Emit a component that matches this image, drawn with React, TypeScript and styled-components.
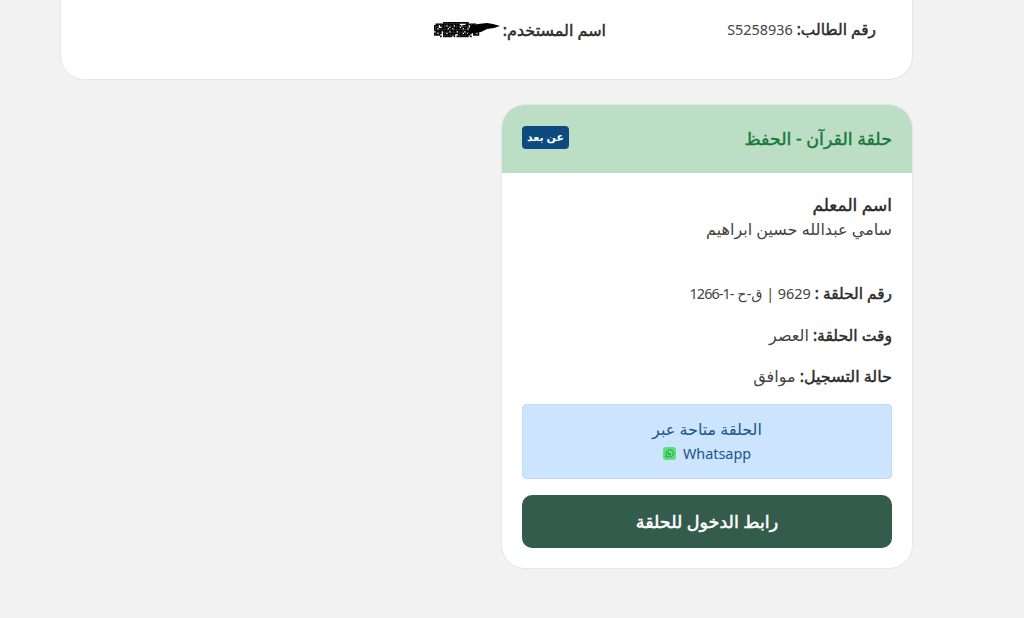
import React from "react";
import styled, { createGlobalStyle } from "styled-components";

const GlobalStyle = createGlobalStyle`
  html, body {
    margin: 0;
    padding: 0;
    height: 618px;
    overflow: hidden;
    background: #f2f2f2;
    font-family: "Noto Sans", "DejaVu Sans", sans-serif;
    color: #333333;
  }
  * { box-sizing: border-box; }
`;

const Page = styled.div`
  direction: rtl;
  padding: 0 111px 0 60px;
  display: flex;
  flex-direction: column;
  gap: 24px;
`;

const StudentCard = styled.div`
  height: 80px;
  background: #fff;
  border: 1px solid #e6e6e6;
  border-top: none;
  border-radius: 0 0 24px 24px;
  padding: 18px 36px 0;
  display: flex;
  align-items: flex-start;
  font-size: 14.4px;
`;

const StudentCell = styled.div`
  width: 270px;
  height: 24px;
  line-height: 24px;
  display: flex;
  align-items: center;
  gap: 4px;
  white-space: nowrap;
`;

const Bold = styled.b<{ $size?: number }>`
  font-size: ${(p) => p.$size ?? 15.6}px;
  font-weight: 400;
  color: #2b2b2b;
  -webkit-text-stroke: 0.45px #2b2b2b;
`;

const Plain = styled.span`
  color: #444;
  font-size: 14.4px;
`;

const CircleCode = styled.span`
  display: inline-block;
  direction: ltr;
  letter-spacing: -0.9px;
`;

const ArabicPlain = styled.span`
  color: #444;
  font-size: 16px;
`;

const CircleCard = styled.div`
  width: 412px;
  height: 465px;
  background: #fff;
  border: 1px solid #e6e6e6;
  border-radius: 24px;
  overflow: hidden;
  display: flex;
  flex-direction: column;
`;

const CircleHeader = styled.div`
  height: 68px;
  background: #bcdec5;
  padding: 0 20px;
  display: flex;
  align-items: center;
  justify-content: space-between;
`;

const CircleTitle = styled.h3`
  margin: -2px 0 0;
  font-size: 17.5px;
  font-weight: 400;
  color: #19783c;
  -webkit-text-stroke: 0.4px #19783c;
`;

const ModeBadge = styled.span`
  background: #0d4a80;
  color: #fff;
  font-size: 11px;
  font-weight: 700;
  line-height: 22px;
  height: 23px;
  padding: 0 5px;
  border-radius: 4px;
  margin-top: -4px;
`;

const CircleBody = styled.div`
  padding: 20px 20px 0;
  display: flex;
  flex-direction: column;
  font-size: 14.4px;
`;

const TeacherName = styled.div`
  height: 24px;
  line-height: 24px;
  color: #444;
  font-size: 16px;
`;

const TeacherLabel = styled.div`
  height: 24px;
  line-height: 24px;
  font-size: 17px;
  color: #2b2b2b;
  -webkit-text-stroke: 0.45px #2b2b2b;
`;

const InfoRow = styled.div<{ $top: number }>`
  height: 24px;
  line-height: 24px;
  margin-top: ${(p) => p.$top}px;
`;

const Notice = styled.div`
  margin-top: 16px;
  height: 75px;
  background: #cce4fd;
  border: 1px solid #bfdcf8;
  border-radius: 4px;
  color: #1b5688;
  display: flex;
  flex-direction: column;
  align-items: center;
  justify-content: center;
  line-height: 24px;
`;

const NoticeLine = styled.div`
  font-size: 16px;
  height: 24px;
  line-height: 22px;
`;

const Channel = styled.div`
  display: flex;
  align-items: center;
  gap: 7px;
  direction: ltr;
  height: 24px;
`;

const JoinButton = styled.button`
  margin-top: 16px;
  height: 53px;
  width: 100%;
  border: none;
  border-radius: 10px;
  padding: 0 0 2px;
  background: #335c4d;
  color: #fff;
  font-family: inherit;
  font-size: 17.5px;
  font-weight: 400;
  -webkit-text-stroke: 0.5px #fff;
`;

const ScribbleMark = styled.svg`
  margin-right: -1px;
  flex-shrink: 0;
`;

const WhatsappIcon = () => (
  <svg width="13" height="13" viewBox="0 0 14 14">
    <rect width="14" height="14" rx="3" fill="#5ce27a" />
    <path
      d="M3 11l.7-2.4A4 4 0 1 1 5.3 10.3L3 11z"
      fill="none"
      stroke="#27954f"
      strokeWidth="1"
    />
    <path d="M5.6 5.4c0 1.6 1.4 3 3 3" fill="none" stroke="#27954f" strokeWidth="1.2" />
  </svg>
);

// the name is scribbled over in the picture: a speckled left part, a solid right part
const speckles: number[][] = [];
for (let x = 0; x < 44; x += 1.5) {
  for (let y = 1; y < 16; y += 1.5) {
    const inside = Math.abs(y - 8) < 5 + 3 * Math.sin(((x + 2) / 46) * Math.PI);
    const on = (Math.floor(x * 2) * 7 + Math.floor(y * 2) * 13 + Math.floor(x * y)) % 5 !== 0;
    if (inside && on) speckles.push([x, y]);
  }
}

const Scribble = () => (
  <ScribbleMark width="66" height="18" viewBox="0 0 66 18">
    {speckles.map(([x, y]) => (
      <rect key={`${x}-${y}`} x={x} y={y} width="1.7" height="1.7" fill="#000" />
    ))}
    <path d="M36 5l8-2 9-1 6 1 7 2-6 2-7 1-6 3-8 1-5 2z" fill="#000" />
  </ScribbleMark>
);

export default function App() {
  return (
    <>
      <GlobalStyle />
      <Page>
        <StudentCard>
          <StudentCell>
            <Bold $size={15.4}>رقم الطالب:</Bold>
            <Plain>S5258936</Plain>
          </StudentCell>
          <StudentCell>
            <Bold $size={16}>اسم المستخدم:</Bold>
            <Scribble />
          </StudentCell>
        </StudentCard>
        <CircleCard>
          <CircleHeader>
            <CircleTitle>حلقة القرآن - الحفظ</CircleTitle>
            <ModeBadge>عن بعد</ModeBadge>
          </CircleHeader>
          <CircleBody>
            <TeacherLabel>اسم المعلم</TeacherLabel>
            <TeacherName>سامي عبدالله حسين ابراهيم</TeacherName>
            <InfoRow $top={41}>
              <Bold $size={15.4}>رقم الحلقة : </Bold>
              <Plain>
                9629 | ق-ح <CircleCode>1266-1-</CircleCode>
              </Plain>
            </InfoRow>
            <InfoRow $top={17}>
              <Bold>وقت الحلقة: </Bold>
              <ArabicPlain>العصر</ArabicPlain>
            </InfoRow>
            <InfoRow $top={17}>
              <Bold $size={16}>حالة التسجيل: </Bold>
              <ArabicPlain>موافق</ArabicPlain>
            </InfoRow>
            <Notice>
              <NoticeLine>الحلقة متاحة عبر</NoticeLine>
              <Channel>
                <WhatsappIcon />
                <span>Whatsapp</span>
              </Channel>
            </Notice>
            <JoinButton>رابط الدخول للحلقة</JoinButton>
          </CircleBody>
        </CircleCard>
      </Page>
    </>
  );
}
